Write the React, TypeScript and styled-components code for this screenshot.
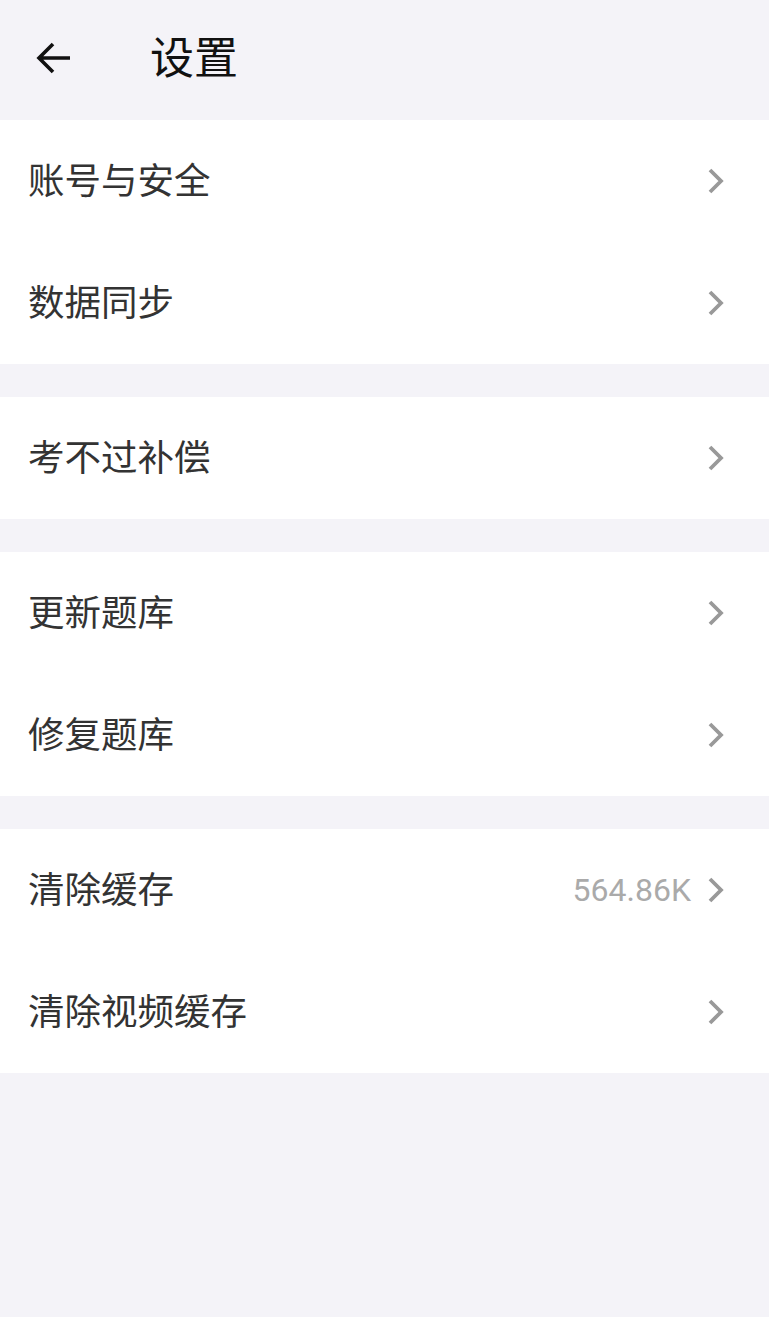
import React from 'react';
import styled, { createGlobalStyle } from 'styled-components'

const GlobalStyle = createGlobalStyle`
    html, body {
        margin: 0;
        padding: 0;
        background: #f4f3f8;
    }
    body {
        font-family: Roboto, "Noto Sans CJK SC", sans-serif;
    }
`
const Page = styled.div`
    display: flex;
    flex-direction: column;
    width: 100%;
    min-height: 1317px;
    background: #f4f3f8;
`
const Header = styled.div`
    display: flex;
    flex-direction: row;
    align-items: center;
    height: 120px;
    padding-left: 34px;
    padding-bottom: 4px;
    box-sizing: border-box;
`
const BackButton = styled.div`
    display: flex;
    width: 40px;
    height: 40px;
    align-items: center;
    justify-content: center;
    cursor: pointer;
`
const Title = styled.span`
    margin-left: 76px;
    font-size: 44px;
    line-height: 1;
    padding-bottom: 6px;
    color: #111;
    font-family: "Noto Sans CJK SC", sans-serif;
`
const Group = styled.div`
    display: flex;
    flex-direction: column;
    background: white;
    margin-bottom: 33px;
`
const Row = styled.div`
    display: flex;
    flex-direction: row;
    align-items: center;
    height: 122px;
    padding-left: 28px;
    padding-right: 44px;
    box-sizing: border-box;
    cursor: pointer;
`
const Label = styled.span`
    font-size: 36.5px;
    line-height: 1;
    padding-bottom: 4px;
    color: #333;
    font-family: "Noto Sans CJK SC", sans-serif;
`
const Extra = styled.span`
    margin-left: auto;
    margin-right: 16px;
    font-size: 32px;
    color: #aaa;
    font-family: Roboto, sans-serif;
`
const Chevron = styled.svg<{ $auto: boolean }>`
    margin-left: ${p => p.$auto ? 'auto' : '0'};
    width: 18px;
    height: 26px;
`

type Item = { label: string, extra?: string }

const groups: Item[][] = [
    [{ label: '账号与安全' }, { label: '数据同步' }],
    [{ label: '考不过补偿' }],
    [{ label: '更新题库' }, { label: '修复题库' }],
    [{ label: '清除缓存', extra: '564.86K' }, { label: '清除视频缓存' }],
]

const App = () => {
    return (
        <Page>
            <GlobalStyle />
            <Header>
                <BackButton>
                    <svg width="36" height="34" viewBox="0 0 36 34">
                        <path d="M34 17 H4 M17 3 L3 17 L17 31" stroke="#111" strokeWidth="3.6" fill="none" />
                    </svg>
                </BackButton>
                <Title>设置</Title>
            </Header>
            {groups.map((group, gi) => (
                <Group key={gi}>
                    {group.map(item => (
                        <Row key={item.label}>
                            <Label>{item.label}</Label>
                            {item.extra ? <Extra>{item.extra}</Extra> : null}
                            <Chevron $auto={!item.extra} viewBox="0 0 18 26">
                                <path d="M3 2 L14 13 L3 24" stroke="#999" strokeWidth="3.8" fill="none" />
                            </Chevron>
                        </Row>
                    ))}
                </Group>
            ))}
        </Page>
    )
}

export default App
